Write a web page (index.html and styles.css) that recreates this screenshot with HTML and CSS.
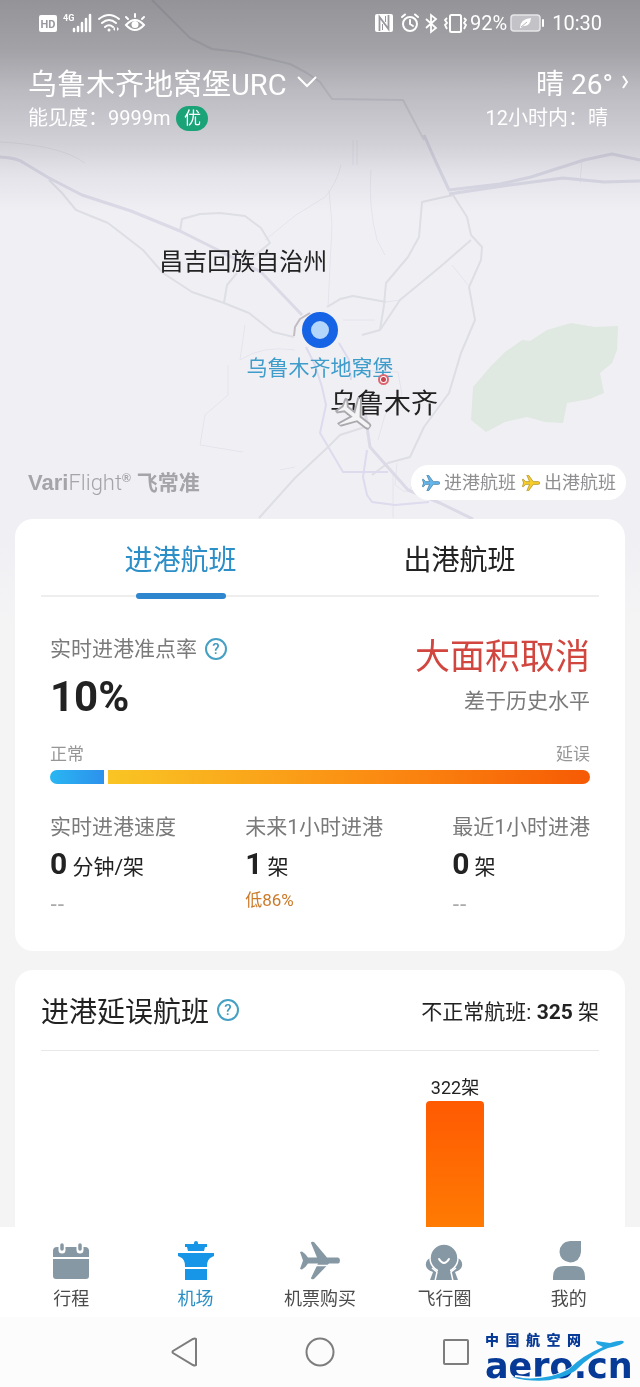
FILE: index.html
```html
<!DOCTYPE html>
<html lang="zh-CN">
<head>
<meta charset="utf-8">
<meta name="viewport" content="width=device-width, initial-scale=1">
<title>乌鲁木齐地窝堡URC</title>
<link rel="stylesheet" href="styles.css">
</head>
<body>
<svg class="defs" aria-hidden="true">
  <symbol id="plane" viewBox="0 0 40 36">
    <path d="M1 10 3 9.500 8 15H17L11 1Q11 0 14 0L25 15H36.500Q40 15.500 40 18 40 20.500 36.500 21H25L14 36Q11 36 11 35L17 21H8L3 26.500 1 26 3.500 18Z"/>
  </symbol>
</svg>
<main class="page">
  <section class="hero">
    <svg class="map" viewBox="0 0 640 560" preserveAspectRatio="xMidYMin slice" aria-hidden="true">
      <path class="park" d="M473 387 490 367 505 352 522 340 530 341 547 330 571 323 595 327 618 326 617 350 612 363 600 373 604 393 590 399 567 403 563 423 545 422 527 417 505 422 486 432 471 420Z"/>
      <g class="minor">
        <path d="M353 140V165M357 140V165M341 165Q336 185 325 197L296 215 265 240M371 170Q368 205 377 240L385 255M329 190 332 225 328 307 340 300M0 142Q60 145 85 163M452 265 468 285M343 320H375M582 160 580 183M245 325 240 360Q262 345 295 350M228 365V395L205 415 200 445 243 452M280 470 295 467M355 370 398 372 402 395 385 415 378 440M386 302 400 300M397 463 395 485 405 492 415 485M393 475V518"/>
      </g>
      <g class="roads">
        <path d="M49 180 62 193 76 210 108 223 143 250 163 273 192 292 224 303 249 313 273 332 294 337"/>
        <path d="M180 231 182 219 200 214 220 213 245 216 261 228 270 243 252 258M237 273 227 285 224 303"/>
        <path d="M453 195 422 202 419 237 408 257 386 283 384 305 380 330M453 195 467 217 471 235 482 247 481 260 469 287 475 320 461 353 449 393 424 427 410 457 388 463 372 475"/>
        <path d="M471 240 440 267 400 300 380 330 362 335M327 307 340 299 353 296 386 302"/>
        <path class="tint" d="M306 347 315 365 322 387 326 405 320 433 333 455 343 472 388 472M367 450 363 477 367 495 372 502 395 505 429 502M339 343 349 360 351 380"/>
        <path d="M259 518 295 478 327 448 340 435 365 427"/>
        <path d="M152 0 190 38 212 49 240 52 290 64 307 73 320 82 332 99 403 100 424 140"/>
      </g>
      <g class="roads major">
        <path d="M0 157Q18 158 24 163L49 178 82 195 131 211 180 231 212 247 261 272 302 315"/>
        <path d="M424 135 435 160 449 190 500 184 531 177 584 160 612 154 640 160M449 194 510 185 563 178 604 182 640 181"/>
        <path d="M365 410 367 427 370 447 408 490 440 503 473 519"/>
      </g>
      <path class="terminal" d="M294 336 295 327 300 319 310 313"/>
    </svg>

    <div class="statusbar">
      <div class="status-group">
        <svg width="108" height="24" viewBox="0 0 108 24" aria-label="HD 4G">
          <rect x="1" y="4" width="18" height="17" rx="2" fill="#fff"/>
          <text x="10" y="16.500" class="hd">HD</text>
          <text x="25" y="10" class="net">4G</text>
          <path d="M36 18V20M40 16V20M44 12V20M48 8V20M52 4V20" stroke="#fff" stroke-width="2.500" stroke-linecap="round"/>
          <g fill="none" stroke="#fff" stroke-width="2" stroke-linecap="round"><path d="M61 8Q71 0 81 8M64 12Q71 6 78 12M67 16Q71 12.500 75 16"/><path d="M88 14Q97 4 106 14 97 24 88 14ZM90 8 88 6M97 6V3M104 8 106 6"/></g>
          <circle cx="71" cy="19" r="1.500" fill="#fff"/><circle cx="97" cy="13.500" r="3.500" fill="#fff"/><path d="M77 16V20L75 18ZM79 16V20L81 18Z" fill="#fff"/>
        </svg>
      </div>
      <div class="status-group">
        <svg width="93" height="24" viewBox="0 0 93 24" aria-hidden="true" fill="none" stroke="#fff">
          <rect x="1" y="3" width="18" height="18" rx="2" fill="#fff" stroke="none"/>
          <path d="M5.500 20V6L14.500 18V4" stroke="#99989f" stroke-width="1.800"/>
          <path d="M8.500 19V13M11.500 11V5" stroke="#99989f" stroke-width="1"/>
          <g stroke-width="2" stroke-linecap="round"><circle cx="36" cy="13" r="7"/><path d="M36 9V13L39 15M28 6 31 3.500M44 6 41 3.500"/></g>
          <path d="M52 8 62 17 57 21V4L62 8 52 17" stroke-width="1.800"/>
          <rect x="76" y="4" width="11" height="17" rx="1.500" stroke-width="2"/>
          <path d="M73 7 71 9 73 12 71 14 73 18M90 7 92 9 90 12 92 14 90 18" stroke-width="1.800"/>
        </svg>
        <span>92%</span>
        <svg class="battery" width="35" height="18" viewBox="0 0 35 18" aria-hidden="true">
          <rect x="1" y="1" width="29" height="16" rx="3" fill="#c3c2c7" stroke="#e6e6e9" stroke-width="1.500"/>
          <path d="M33 6V12" stroke="#fff" stroke-width="2" stroke-linecap="round"/>
          <path d="M10 14Q10 5 21 4 20 13 13 12L11 14Z" fill="#fff"/><path d="M11 13 17 8" stroke="#b9b8bd"/>
        </svg>
        <time>10:30</time>
      </div>
    </div>

    <header class="airport">
      <div class="airport-row">
        <button class="airport-name" type="button">乌鲁木齐地窝堡URC
          <svg width="22" height="16" viewBox="0 0 22 16" aria-hidden="true"><path d="M2 3 11 12 20 3"/></svg>
        </button>
        <button class="weather" type="button">晴 26°
          <svg width="8" height="16" viewBox="0 0 8 16" aria-hidden="true"><path d="M2 2 6 8 2 14"/></svg>
        </button>
      </div>
      <div class="airport-row sub">
        <p>能见度：9999m <span class="quality">优</span></p>
        <p class="forecast">12小时内：晴</p>
      </div>
    </header>

    <div class="map-area">
      <span class="place region">昌吉回族自治州</span>
      <span class="marker"></span>
      <span class="place port">乌鲁木齐地窝堡</span>
      <span class="city-dot"></span>
      <span class="place city">乌鲁木齐</span>
      <svg class="map-plane" width="42" height="38" viewBox="-2 -2 44 40" aria-hidden="true"><use href="#plane" width="40" height="36"/></svg>
    </div>

    <div class="map-foot">
      <p class="brand"><b>Vari</b><span>Flight</span><sup>®</sup><strong>飞常准</strong></p>
      <div class="legend">
        <svg class="in" width="20" height="18" viewBox="-2 -2 44 40" aria-hidden="true"><use href="#plane" width="40" height="36"/></svg><span>进港航班</span>
        <svg class="out" width="20" height="18" viewBox="-2 -2 44 40" aria-hidden="true"><use href="#plane" width="40" height="36"/></svg><span>出港航班</span>
      </div>
    </div>
  </section>

  <section class="card">
    <div class="tabs" role="tablist">
      <button type="button" role="tab" aria-selected="true">进港航班</button>
      <button type="button" role="tab" aria-selected="false">出港航班</button>
    </div>
    <div class="summary">
      <div>
        <p class="label titled">实时进港准点率 <button class="help" type="button" aria-label="说明">?</button></p>
        <p class="rate">10%</p>
      </div>
      <div class="verdict">
        <p class="alert">大面积取消</p>
        <p class="label">差于历史水平</p>
      </div>
    </div>
    <div class="scale">
      <div class="scale-ends"><span>正常</span><span>延误</span></div>
      <div class="scale-bar"><i class="ok"></i><i class="late"></i></div>
    </div>
    <div class="stats">
      <div><p class="label">实时进港速度</p><p class="value"><b>0</b> 分钟/架</p><p class="note none">--</p></div>
      <div><p class="label">未来1小时进港</p><p class="value"><b>1</b> 架</p><p class="note low">低86%</p></div>
      <div><p class="label">最近1小时进港</p><p class="value"><b>0</b> 架</p><p class="note none">--</p></div>
    </div>
  </section>

  <section class="card delays">
    <div class="delays-head">
      <h2 class="titled">进港延误航班 <button class="help" type="button" aria-label="说明">?</button></h2>
      <p>不正常航班: <b>325</b> 架</p>
    </div>
    <div class="chart"><div class="column"><span>322架</span><i></i></div></div>
  </section>
</main>

<footer class="bottom">
  <nav class="tabbar">
    <a href="#trip"><svg width="38" height="40" viewBox="0 0 38 40" aria-hidden="true"><path d="M5 6H33Q37 6 37 10V16H1V10Q1 6 5 6ZM1 18H37V35Q37 38 34 38H4Q1 38 1 35Z"/><path d="M10 4V9M28 4V9" stroke="#fff" stroke-width="7" stroke-linecap="round"/><path d="M10 4V8M28 4V8" stroke="#8798a5" stroke-width="3.500" stroke-linecap="round"/></svg>行程</a>
    <a class="current" href="#airport"><svg width="38" height="40" viewBox="0 0 38 40" aria-hidden="true"><path d="M17 2Q17 0 19 0 21 0 21 2V3H30V6H28L27 10H11L10 6H8V3H17ZM1 12H37V15L35 16Q30 18 30 25V26H8V25Q8 18 3 16L1 15ZM8 28H30V39H8Z"/></svg>机场</a>
    <a href="#ticket"><svg width="42" height="40" viewBox="0 0 42 40" aria-hidden="true"><path d="M1 11 3 10.500Q7 13 9 16.500H18L12 2Q12 0 15 1L28 16.500H39Q41 17 41 19.500 41 22 39 22.500H30L15 38Q12 39 12 37L19 22.500H9Q7 26 3 28.500L1 28 4 19.500Z"/><path d="M16 24.500H30" stroke="#fff" stroke-width="1.500"/></svg>机票购买</a>
    <a href="#circle"><svg width="38" height="40" viewBox="0 0 38 40" aria-hidden="true"><path d="M5 17Q0 20 1 25 2 29 8 31L5 39H33L30 31Q36 29 37 25 38 20 33 17Z"/><path d="M7 27 12 31 10 40M31 27 26 31 28 40" fill="none" stroke="#fff" stroke-width="1.500"/><circle cx="19" cy="17" r="14" stroke="#fff" stroke-width="1.500"/><path d="M13 28H25V34H13Z"/><path d="M14 18Q19 26 24 18" fill="none" stroke="#fff" stroke-width="2" stroke-linecap="round"/></svg>飞行圈</a>
    <a href="#me"><svg width="38" height="40" viewBox="0 0 38 40" aria-hidden="true"><path d="M20 0H31V11Q30 21 20 21.500 10 20 9.500 11 10 1 20 0ZM3 39V36Q3 25 14 25H25Q35 25 35 36V39Z"/></svg>我的</a>
  </nav>
  <div class="sysnav">
    <button type="button" aria-label="返回"><svg width="30" height="30" viewBox="0 0 30 30"><path d="M27 2V28Q26 29 24 28L4 16Q3 15 4 14L24 2Q26 1 27 2Z"/></svg></button>
    <button type="button" aria-label="主页"><svg width="30" height="30" viewBox="0 0 30 30"><circle cx="15" cy="15" r="13.500"/></svg></button>
    <button type="button" aria-label="最近任务"><svg width="30" height="30" viewBox="0 0 30 30"><rect x="3" y="3" width="24" height="24" rx="1"/></svg></button>
  </div>
  <div class="watermark">
    <p class="wm-cn"><span>中</span><span>国</span><span>航</span><span>空</span><span>网</span></p>
    <p class="wm-en">aero.cn</p>
    <svg width="152" height="46" viewBox="0 0 152 46" aria-hidden="true"><path class="edge" d="M30 37Q65 43 86 29 99 18 116 9"/><path d="M26 38Q62 43 84 30 98 16 118 8L112 5 111 2 125 4Q138 0 139 3 138 6 123 9 108 14 90 32 65 48 26 38Z"/></svg>
  </div>
</footer>
</body>
</html>
```
FILE: styles.css
```css
* { box-sizing: border-box; }
body {
  margin: 0;
  min-height: 100vh;
  display: flex;
  flex-direction: column;
  background: #f4f4f5;
  color: #222;
  font-family: Roboto, "Noto Sans CJK SC", sans-serif;
}
p, h2 { margin: 0; font-weight: 400; }
button {
  padding: 0;
  border: 0;
  background: none;
  color: inherit;
  font: inherit;
  cursor: pointer;
}
a { color: inherit; text-decoration: none; }
.defs { position: absolute; width: 0; height: 0; }
.page {
  flex: 1;
  display: flex;
  flex-direction: column;
  background: linear-gradient(#f0eff4 540px, #f4f4f5 620px);
}

/* Map header */
.hero { position: relative; color: #fff; overflow: hidden; }
.hero::before {
  content: "";
  position: absolute;
  inset: 0;
  background: linear-gradient(#949398 0, #a3a2a7 50px, #bbbac0 90px, #d2d1d7 145px, #e4e3e9 175px, rgba(240, 239, 244, 0) 212px);
}
.map { position: absolute; inset: 0; width: 100%; height: 100%; mix-blend-mode: multiply; z-index: 1; }
.map path { fill: none; stroke-linejoin: round; }
.map .park { fill: #eef9ec; }
.minor { stroke: #f4f4f8; stroke-width: 1; }
.roads { stroke: #ecedf0; stroke-width: 2; }
.roads .tint { stroke: #ebeaf8; }
.major { stroke: #e9e9f1; stroke-width: 3; }
.terminal { stroke: #cfc9cb; stroke-width: 2; }
.statusbar, .airport, .map-area, .map-foot { position: relative; z-index: 2; }
.statusbar {
  display: flex;
  justify-content: space-between;
  align-items: center;
  height: 46px;
  padding: 0 38px;
  font-size: 20px;
}
.status-group { display: flex; align-items: center; gap: 3px; }
.battery { margin-right: 4px; }
.hd { font: 700 11px Roboto, sans-serif; fill: #99989f; text-anchor: middle; }
.net { font: 700 9px Roboto, sans-serif; fill: #fff; }
.airport { padding: 16px 11px 0 28px; }
.airport-row { display: flex; justify-content: space-between; align-items: center; height: 40px; }
.airport-row.sub { height: 31px; padding-right: 21px; font-size: 20px; line-height: 30px; }
.airport-name, .weather { display: flex; align-items: center; gap: 9px; font-size: 29px; }
.weather { gap: 8px; font-size: 28px; }
.airport-row svg { fill: none; stroke: #fff; stroke-width: 2; }
.quality {
  display: inline-block;
  width: 32px;
  margin-left: 1px;
  border-radius: 13px;
  background: #1ba378;
  font-size: 17px;
  line-height: 25px;
  text-align: center;
  vertical-align: 1px;
}
.map-area { height: 332px; }
.place, .marker, .city-dot, .map-plane { position: absolute; white-space: nowrap; }
.place { transform: translate(-50%, -50%); color: #222; }
.region { left: 38%; top: 126px; font-size: 24px; }
.port { left: 50%; top: 233px; color: #3f9dcb; font-size: 21px; }
.city { left: 60%; top: 268px; font-size: 27px; }
.marker {
  left: calc(50% - 18px);
  top: 179px;
  width: 36px;
  height: 36px;
  border: 9px solid #1763e6;
  border-radius: 50%;
  background: #b5d6fb;
}
.city-dot {
  left: calc(60% - 6px);
  top: 241px;
  width: 11px;
  height: 11px;
  border: 2px solid #dc6771;
  border-radius: 50%;
  background: radial-gradient(#c94451 2px, #fff 3px);
}
.map-plane {
  left: calc(55% - 18px);
  top: 264px;
  transform: rotate(38deg);
  fill: #f4f4f6;
  stroke: #aaa9ad;
  stroke-width: 2;
}
.map-foot {
  display: flex;
  justify-content: space-between;
  align-items: center;
  padding: 0 14px 19px 28px;
  color: #a5a4a9;
}
.brand { font-family: "Liberation Sans", "Noto Sans CJK SC", sans-serif; font-size: 22px; line-height: 32px; }
.brand span { font-family: Roboto, sans-serif; font-weight: 300; }
.brand sup { font-size: 12px; font-weight: 700; line-height: 12px; }
.brand strong { margin-left: 6px; font-size: 21px; }
.legend {
  display: flex;
  align-items: center;
  gap: 3px;
  height: 35px;
  padding: 0 10px;
  border-radius: 18px;
  background: #fff;
  color: #8f8f92;
  font-size: 18px;
  line-height: 24px;
}
.legend svg { stroke-width: 2; }
.legend .in { fill: #64b6ed; stroke: #5089ad; }
.legend .out { margin-left: 2px; fill: #f8cf28; stroke: #b99a34; }

/* Cards */
.card { margin: 0 15px; padding: 0 26px; border-radius: 18px; background: #fff; }
.tabs { display: grid; grid-template-columns: 1fr 1fr; border-bottom: 2px solid #eee; }
.tabs button { position: relative; height: 76px; padding-top: 8px; font-size: 28px; line-height: 40px; }
.tabs [aria-selected="true"] { color: #2d8fc8; }
.tabs [aria-selected="true"]::after {
  content: "";
  position: absolute;
  left: calc(50% - 45px);
  bottom: -4px;
  width: 90px;
  height: 6px;
  border-radius: 3px;
  background: #2e86cf;
}
.label { color: #7a7a7a; font-size: 21px; line-height: 30px; }
.titled { display: flex; align-items: center; gap: 8px; }
.help {
  width: 22px;
  height: 22px;
  border: 2px solid #45a0c3;
  border-radius: 50%;
  color: #3f9bbf;
  font-size: 15px;
  font-weight: 500;
  line-height: 18px;
}
.summary { display: flex; justify-content: space-between; padding: 37px 9px 0; }
.rate { font-size: 42px; font-weight: 700; line-height: 66px; }
.verdict { text-align: right; }
.alert { color: #d1463f; font-size: 35px; line-height: 48px; }
.verdict .label { line-height: 38px; }
.scale { padding: 10px 9px 0; }
.scale-ends { display: flex; justify-content: space-between; color: #969696; font-size: 17px; line-height: 28px; }
.scale-bar { display: flex; gap: 4px; height: 14px; margin-top: 2px; }
.scale-bar i { flex: 9; }
.scale-bar .ok { flex: 1; border-radius: 7px 0 0 7px; background: linear-gradient(90deg, #29b6f2, #2d91ec); }
.scale-bar .late { background: linear-gradient(90deg, #f9c524, #fb8c12 55%, #f65a04); border-radius: 0 7px 7px 0; }
.stats { display: flex; justify-content: space-between; padding: 28px 9px 36px; }
.value { font-size: 21px; line-height: 44px; }
.value b { font-size: 30px; }
.note { color: #aaa; font-size: 17px; line-height: 22px; }
.none { padding-top: 4px; font-family: "Liberation Sans", sans-serif; font-size: 22px; line-height: 22px; }
.low { color: #cb7b2b; }
.delays { flex: 1; display: flex; flex-direction: column; margin-top: 19px; border-radius: 18px 18px 0 0; }
.delays-head {
  display: flex;
  justify-content: space-between;
  align-items: center;
  height: 81px;
  border-bottom: 1px solid #e8e8e8;
}
.delays h2 { font-size: 28px; }
.delays-head p { font-size: 21px; }
.chart { flex: 1; display: grid; grid-template-columns: repeat(6, 1fr); padding: 24px 6px 0 0; }
.column { grid-column: 5; display: flex; flex-direction: column; align-items: center; font-size: 18px; line-height: 26px; }
.column i { flex: 1; width: 58px; min-height: 124px; border-radius: 4px 4px 0 0; background: linear-gradient(#ff5a02, #ff7b03); }

/* Bottom bars */
.bottom { position: relative; background: #fcfcfc; }
.tabbar { display: grid; grid-template-columns: repeat(5, 1fr); height: 90px; padding: 14px 9px 0; background: #fff; }
.tabbar a { display: flex; flex-direction: column; align-items: center; gap: 5px; color: #4b4b4b; font-size: 18px; line-height: 26px; }
.tabbar svg { fill: #8798a5; }
.tabbar .current { color: #2b8fc6; }
.tabbar .current svg { fill: #1795e6; }
.sysnav { display: grid; grid-template-columns: repeat(3, 136px); justify-content: center; height: 70px; }
.sysnav svg { display: block; margin: 0 auto; fill: none; stroke: #7d7d7d; stroke-width: 2; }
.watermark { position: absolute; right: 3px; bottom: 3px; width: 152px; color: #073a96; }
.watermark svg { position: absolute; right: 0; bottom: -1px; fill: #20a5e2; }
.edge { fill: none; stroke: #fff; stroke-width: 2; }
.wm-cn { display: flex; justify-content: space-between; width: 96px; font-size: 14px; font-weight: 900; line-height: 16px; }
.wm-en { font-family: "DejaVu Sans", sans-serif; font-size: 35px; font-weight: 700; line-height: 36px; }
```
